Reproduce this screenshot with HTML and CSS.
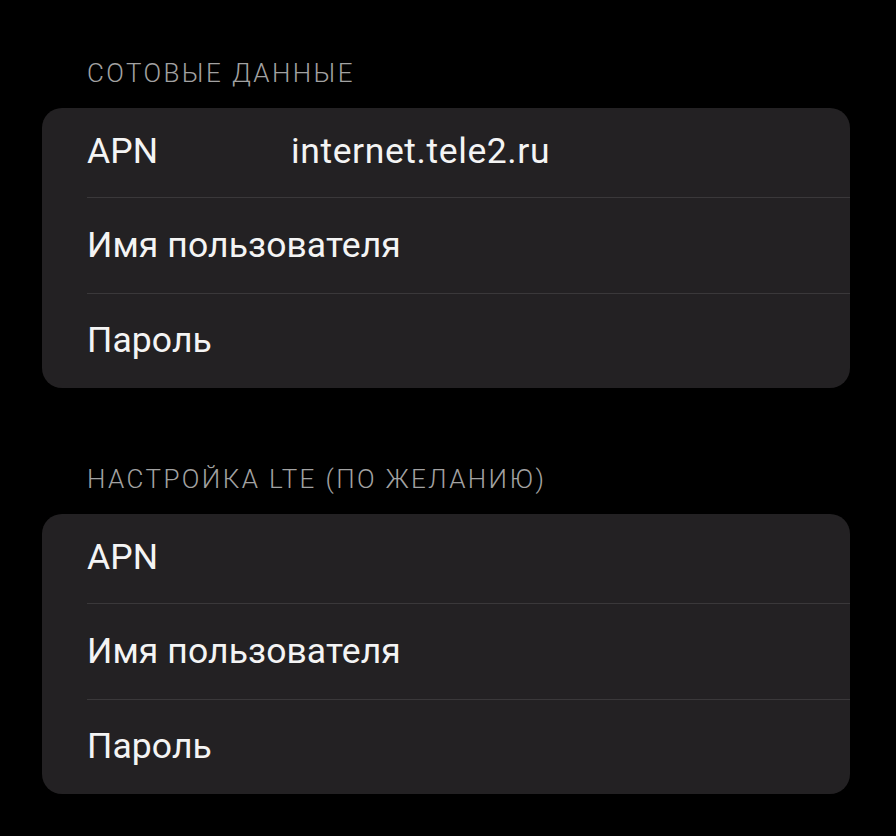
FILE: index.html
```html
<!DOCTYPE html>
<html lang="ru">
<head>
<meta charset="utf-8">
<link rel="stylesheet" href="styles.css">
</head>
<body>
<div class="page">
  <section class="group">
    <div class="group-title">СОТОВЫЕ ДАННЫЕ</div>
    <div class="card">
      <div class="row"><span class="label">APN</span><span class="value">internet.tele2.ru</span></div>
      <div class="row"><span class="label">Имя пользователя</span></div>
      <div class="row"><span class="label">Пароль</span></div>
    </div>
  </section>
  <section class="group">
    <div class="group-title">НАСТРОЙКА LTE (ПО ЖЕЛАНИЮ)</div>
    <div class="card">
      <div class="row"><span class="label">APN</span></div>
      <div class="row"><span class="label">Имя пользователя</span></div>
      <div class="row"><span class="label">Пароль</span></div>
    </div>
  </section>
</div>
</body>
</html>
```

FILE: styles.css
```css
html, body {
  margin: 0;
  padding: 0;
  background: #000;
}
body {
  width: 896px;
  height: 836px;
  overflow: hidden;
  font-family: Roboto, "Liberation Sans", sans-serif;
}
.page {
  padding: 56px 46px 0 42px;
  display: flex;
  flex-direction: column;
  gap: 74px;
}
.group-title {
  color: #a2a2a2;
  font-size: 26px;
  font-weight: 300;
  letter-spacing: 2.4px;
  padding-left: 45px;
  height: 52px;
  line-height: 34px;
}
.card {
  background: #232123;
  border-radius: 20px;
  overflow: hidden;
}
.row {
  height: 96px;
  box-sizing: border-box;
  padding-bottom: 2px;
  display: flex;
  align-items: center;
  margin-left: 45px;
  border-top: 1px solid #3a383a;
}
.row:first-child {
  border-top: none;
  height: 89px;
  padding-bottom: 4px;
}
.row:last-child {
  height: 95px;
}
.label {
  color: #f4f4f4;
  font-size: 35.5px;
  letter-spacing: 0.1px;
  width: 204px;
  flex: none;
  white-space: nowrap;
}
.value {
  color: #f4f4f4;
  font-size: 35.5px;
  letter-spacing: 0.6px;
}
```
